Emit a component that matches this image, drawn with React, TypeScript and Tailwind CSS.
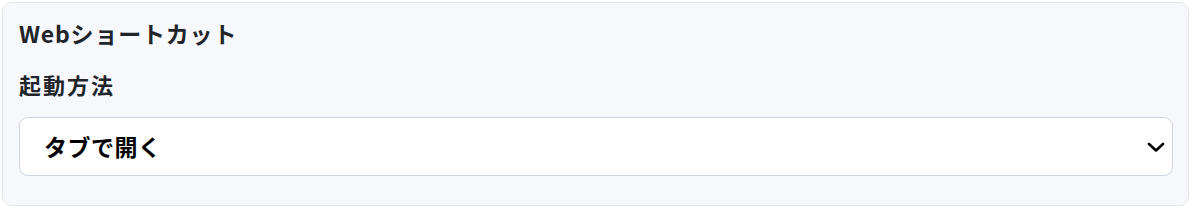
import React from 'react'

const font = { fontFamily: '"Noto Sans CJK JP", "Noto Sans", sans-serif' }

export default function App() {
  return (
    <div className="w-[1192px] h-[208px] bg-white p-[2px]" style={font}>
      <div className="h-[204px] w-[1187px] rounded-[10px] border border-[#e3e5ea] bg-[#f7f8fc] pl-[16px] pr-[15px] pt-[14px]">
        <h2 className="text-[23px] leading-[32px] font-bold text-[#212529] tracking-[0.8px]">
          Webショートカット
        </h2>
        <label className="mt-[19px] block text-[22px] leading-[32px] font-bold text-[#212529] tracking-[2px]">
          起動方法
        </label>
        <div className="mt-[17px] flex h-[59px] items-center justify-between rounded-[9px] border border-[#cdd5e0] bg-white pl-[24px] pr-[7px]">
          <span className="text-[23px] font-bold text-black tracking-[0.5px]">タブで開く</span>
          <svg width="18" height="12" viewBox="0 0 18 12" fill="none">
            <path d="M2 3l7 6.5L16 3" stroke="#000" strokeWidth="2.6" strokeLinecap="round" strokeLinejoin="round" />
          </svg>
        </div>
      </div>
    </div>
  )
}
